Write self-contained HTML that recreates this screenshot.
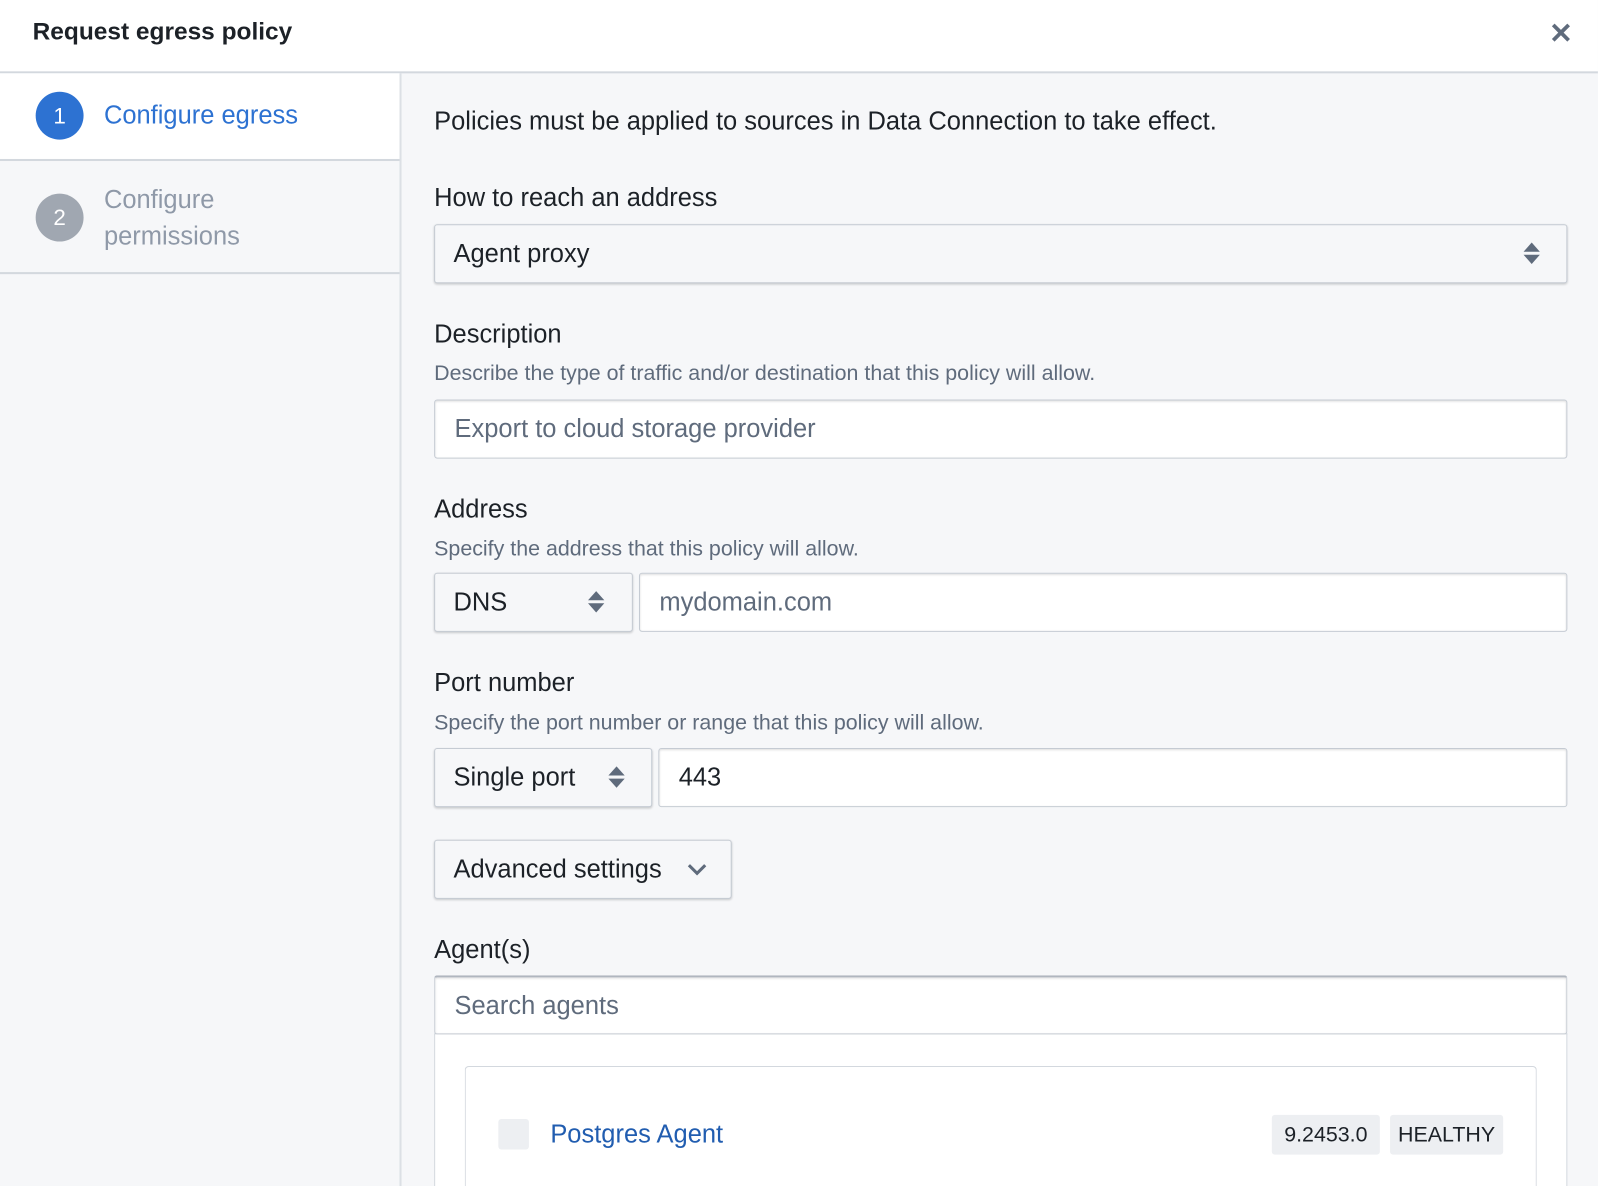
<!DOCTYPE html>
<html><head><style>
html,body{margin:0;padding:0;width:1598px;height:1186px;overflow:hidden;background:#f6f7f9}
#w{position:absolute;left:0;top:0;width:1568px;height:1164px;transform:scale(1.0191);transform-origin:0 0;font-family:"Liberation Sans",sans-serif;color:#1c2127;overflow:hidden}
.a{position:absolute}
.t{font-size:25px;white-space:nowrap}
.s{font-size:21px;color:#5f6b7c;white-space:nowrap}
.in{position:absolute;box-sizing:border-box;background:#fff;border:1px solid #c5cbd3;border-radius:3px;box-shadow:inset 0 1px 2px rgba(17,20,24,.15);height:58px;font-size:25px;line-height:56px;padding-left:19px}
.sel{position:absolute;box-sizing:border-box;background:#f6f7f9;border:1px solid #c5cbd3;border-radius:3px;box-shadow:0 1px 2px rgba(17,20,24,.2);height:58px;font-size:25px;line-height:56px;padding-left:18px}
.car{position:absolute;top:17px;width:0;height:0}
.tag{position:absolute;top:1094px;height:39px;background:#edeff2;border-radius:3px;font-size:21px;line-height:39px;text-align:center}
</style></head><body><div id="w">
<div class="a" style="left:0;top:0;width:1568px;height:70px;background:#fff;border-bottom:2px solid #d3d8de"></div>
<div class="a" style="left:32px;top:18px;font-size:24px;font-weight:bold">Request egress policy</div>
<div class="a" style="left:1520px;top:16px;font-size:28px;font-weight:bold;color:#5f6b7c">✕</div>
<div class="a" style="left:0;top:72px;width:392px;height:1092px;background:#f6f7f9;border-right:2px solid #dce0e5"></div>
<div class="a" style="left:0;top:72px;width:392px;height:84px;background:#fff;border-bottom:2px solid #d3d8de"></div>
<div class="a" style="left:35px;top:90px;width:47px;height:47px;border-radius:50%;background:#2d72d2;color:#fff;font-size:22px;line-height:47px;text-align:center">1</div>
<div class="a t" style="left:102px;top:99px;color:#2d72d2">Configure egress</div>
<div class="a" style="left:35px;top:190px;width:47px;height:47px;border-radius:50%;background:#a0a7b1;color:#fff;font-size:22px;line-height:47px;text-align:center">2</div>
<div class="a" style="left:102px;top:178px;color:#8f99a8;font-size:25px;line-height:36px">Configure<br>permissions</div>
<div class="a" style="left:0;top:267px;width:392px;height:2px;background:#d3d8de"></div>

<div class="a t" style="left:426px;top:105px">Policies must be applied to sources in Data Connection to take effect.</div>
<div class="a t" style="left:426px;top:180px">How to reach an address</div>
<div class="sel" style="left:426px;top:220px;width:1112px">Agent proxy
<div class="car" style="left:1068px;border:8px solid transparent;border-bottom:9px solid #5f6b7c;border-top:0"></div>
<div class="car" style="left:1068px;top:29px;border:8px solid transparent;border-top:9px solid #5f6b7c;border-bottom:0"></div></div>
<div class="a t" style="left:426px;top:314px">Description</div>
<div class="a s" style="left:426px;top:355px">Describe the type of traffic and/or destination that this policy will allow.</div>
<div class="in" style="left:426px;top:392px;width:1112px;color:#5f6b7c">Export to cloud storage provider</div>
<div class="a t" style="left:426px;top:486px">Address</div>
<div class="a s" style="left:426px;top:527px">Specify the address that this policy will allow.</div>
<div class="sel" style="left:426px;top:562px;width:195px">DNS
<div class="car" style="left:150px;border:8px solid transparent;border-bottom:9px solid #5f6b7c;border-top:0"></div>
<div class="car" style="left:150px;top:29px;border:8px solid transparent;border-top:9px solid #5f6b7c;border-bottom:0"></div></div>
<div class="in" style="left:627px;top:562px;width:911px;color:#5f6b7c">mydomain.com</div>
<div class="a t" style="left:426px;top:656px">Port number</div>
<div class="a s" style="left:426px;top:698px">Specify the port number or range that this policy will allow.</div>
<div class="sel" style="left:426px;top:734px;width:214px">Single port
<div class="car" style="left:170px;border:8px solid transparent;border-bottom:9px solid #5f6b7c;border-top:0"></div>
<div class="car" style="left:170px;top:29px;border:8px solid transparent;border-top:9px solid #5f6b7c;border-bottom:0"></div></div>
<div class="in" style="left:646px;top:734px;width:892px">443</div>
<div class="sel" style="left:426px;top:824px;width:292px">Advanced settings
<svg class="a" style="left:246px;top:20px" width="22" height="16" viewBox="0 0 22 16"><path d="M3 4l8 8 8-8" fill="none" stroke="#5f6b7c" stroke-width="3"/></svg></div>
<div class="a t" style="left:426px;top:918px">Agent(s)</div>
<div class="a" style="left:426px;top:1014px;width:1110px;height:150px;background:#fff;border:1px solid #d3d8de;border-bottom:0"></div>
<div class="in" style="left:426px;top:957px;width:1112px;color:#5f6b7c;border-top:2px solid #b0b6bf">Search agents</div>
<div class="a" style="left:456px;top:1046px;width:1050px;height:118px;background:#fff;border:1px solid #d3d8de;border-bottom:0;border-radius:4px 4px 0 0"></div>
<div class="a" style="left:489px;top:1098px;width:30px;height:30px;background:#edeff2;border-radius:3px"></div>
<div class="a t" style="left:540px;top:1099px;color:#215db0">Postgres Agent</div>
<div class="tag" style="left:1248px;width:106px">9.2453.0</div>
<div class="tag" style="left:1364px;width:111px">HEALTHY</div>
</div></body></html>
